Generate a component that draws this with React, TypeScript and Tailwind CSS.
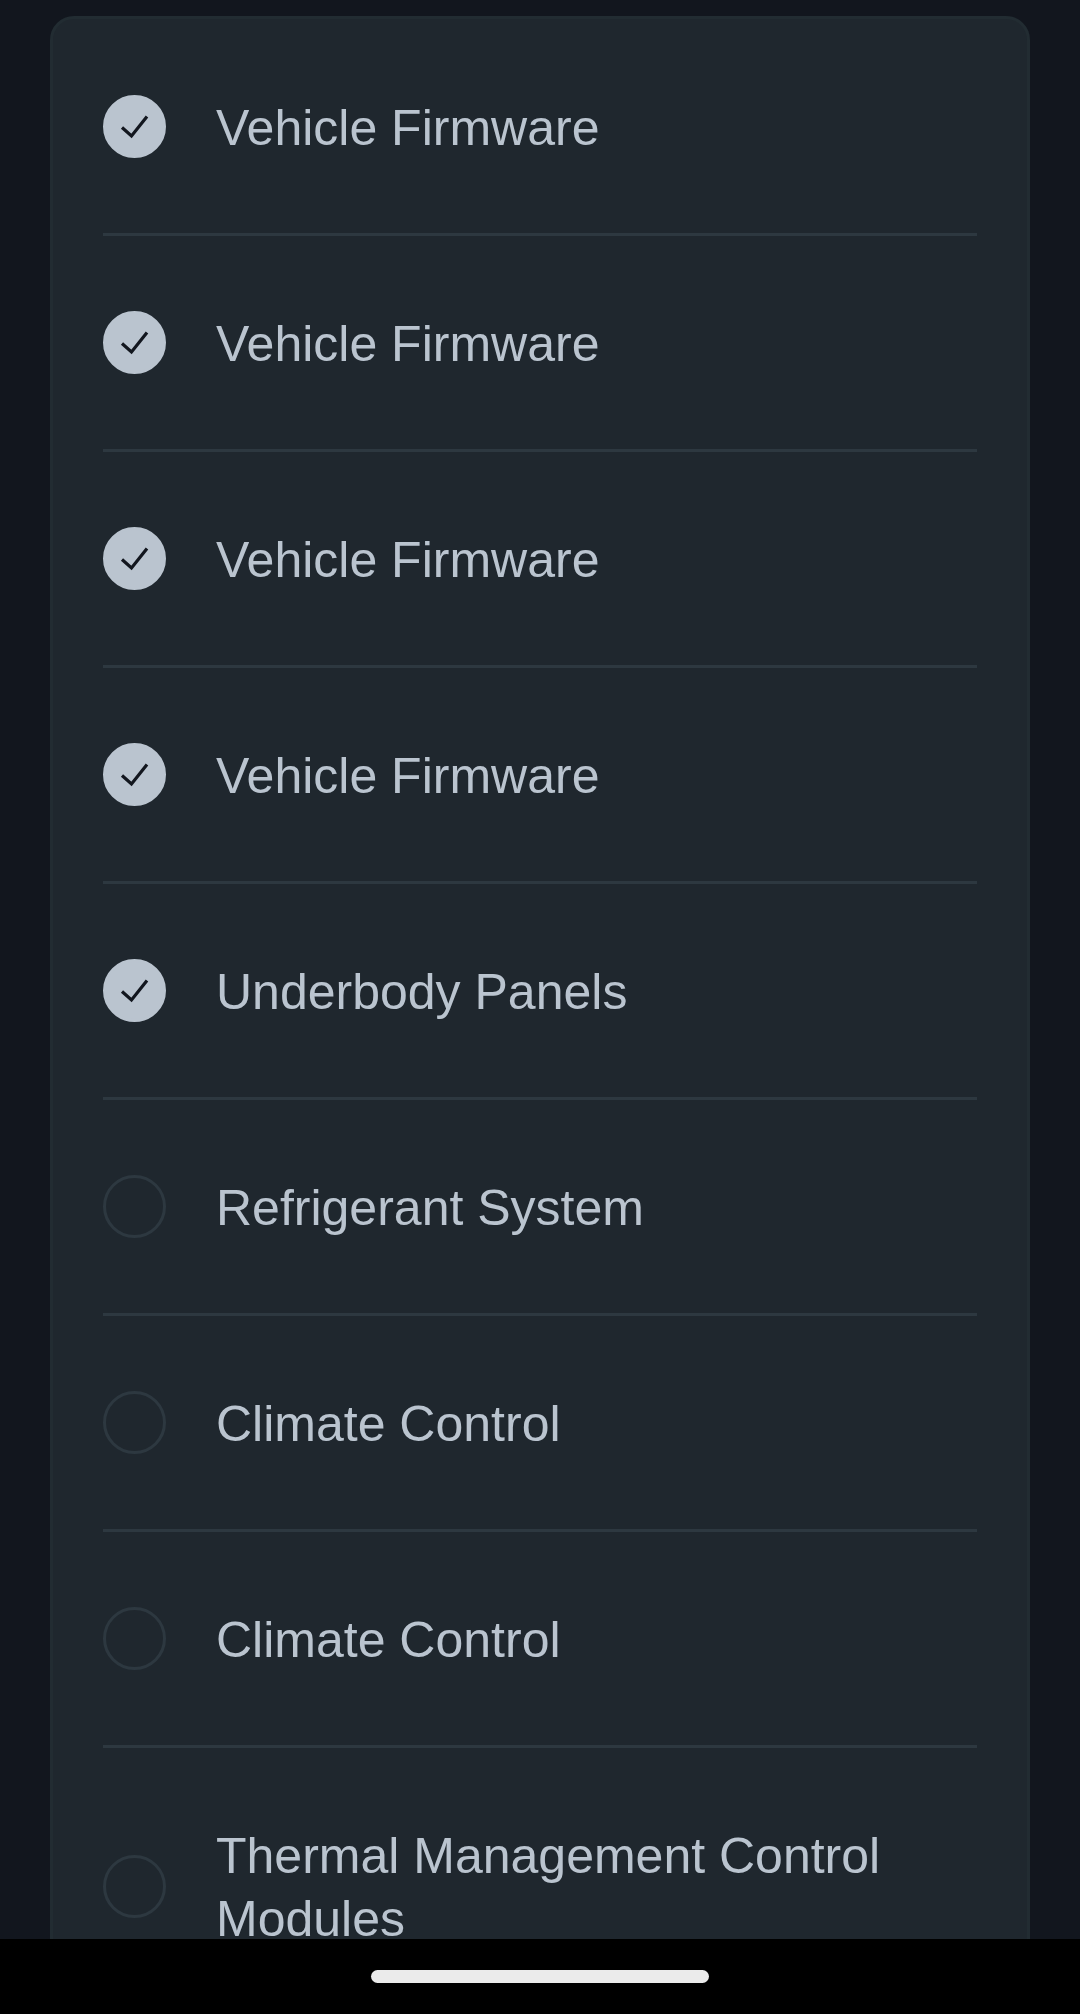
const parts = [
    {id: 1, name: 'Vehicle Firmware', done: true},
    {id: 2, name: 'Vehicle Firmware', done: true},
    {id: 3, name: 'Vehicle Firmware', done: true},
    {id: 4, name: 'Vehicle Firmware', done: true},
    {id: 5, name: 'Underbody Panels', done: true},
    {id: 6, name: 'Refrigerant System', done: false},
    {id: 7, name: 'Climate Control', done: false},
    {id: 8, name: 'Climate Control', done: false},
    {id: 9, name: 'Thermal Management Control Modules', done: false},
];

type PartRowProps = {
    id: number;
    name: string;
    done: boolean;
}

const PartRow = ({id, name, done}: PartRowProps) => {
    return (
        <li className="flex items-center gap-[50px] py-[73px] border-b-3 border-[#2d3840] last:border-b-0">
            <span className="grid shrink-0 place-items-center">
                <input
                    id={`part-${id}`}
                    type="checkbox"
                    defaultChecked={done}
                    className="peer col-start-1 row-start-1 size-[63px] appearance-none rounded-full border-3 border-[#2d3840] checked:border-[#bac4cf] checked:bg-[#bac4cf]"
                />
                <svg
                    viewBox="0 0 63 63"
                    fill="none"
                    aria-hidden="true"
                    className="pointer-events-none invisible col-start-1 row-start-1 size-[63px] text-[#12161e] peer-checked:visible"
                >
                    <path d="M19 32.5L28.5 41L44 21.5" stroke="currentColor" strokeWidth="3.2"/>
                </svg>
            </span>
            <label htmlFor={`part-${id}`} className="min-w-0 flex-1 pt-1 text-[50px] leading-[63px] text-[#bac4cf]">
                {name}
            </label>
        </li>
    );
}

const App = () => {
    return (
        <div className="flex h-screen flex-col bg-[#12161e] font-['Liberation_Sans',Arial,sans-serif]">
            <main className="min-h-0 flex-1 overflow-hidden px-[50px] pt-4">
                <ul className="rounded-3xl border-3 border-[#222c32] bg-[#1f272e] px-[50px] pt-px">
                    {parts.map((part) => (
                        <PartRow key={part.id} {...part}/>
                    ))}
                </ul>
            </main>
            {/* Home indicator */}
            <footer className="flex justify-center bg-black py-[31px]">
                <div className="h-[13px] w-[338px] rounded-full bg-[#ebebeb]"></div>
            </footer>
        </div>
    );
}

export default App;
